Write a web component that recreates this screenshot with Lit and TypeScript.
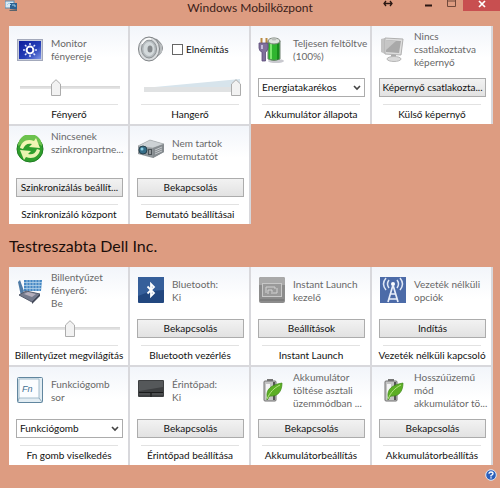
import { LitElement, html, css, svg, nothing, TemplateResult } from "lit";
import { customElement, property } from "lit/decorators.js";
import { classMap } from "lit/directives/class-map.js";

type Control =
  | { kind: "button"; text: string }
  | { kind: "select"; text: string }
  | { kind: "slider"; value: number; wedge?: boolean };

interface Tile {
  icon: string;
  lines: string[];
  check?: string;
  control: Control;
  label: string;
  edge?: string;
}

const battery = svg`
  <rect x="9" y="3" width="6" height="3" fill="#777"/>
  <rect x="6" y="5" width="12" height="20" rx="1" fill="#c4c4c4" stroke="#707070"/>
  <rect x="8" y="8" width="4" height="14" fill="#f4f4f4"/>
  <rect x="15" y="6" width="2" height="18" fill="#555"/>
  <path d="M9 21C8 13 13 9 24 7C24 15 20 21 12 20L9 24Z" fill="#5cae25" stroke="#3f8a18" stroke-width=".7"/>
  <path d="M9 23C12 16 16 12 22 9" stroke="#b7e585" fill="none"/>`;

const icons: Record<string, TemplateResult> = {
  monitor: svg`
    <rect x="1.5" y="4.5" width="25" height="21" fill="#c9cedd" stroke="#a3a9bb"/>
    <rect x="3" y="6" width="22" height="18" fill="url(#mon)"/>
    <defs><linearGradient id="mon" x1="0" x2="1" y1="0" y2="1"><stop offset="0" stop-color="#0c1c9c"/><stop offset=".6" stop-color="#2640b8"/><stop offset="1" stop-color="#7f95e6"/></linearGradient></defs>
    <circle cx="14" cy="15" r="3.4" fill="#1a2c9e" stroke="#fff" stroke-width="2"/>
    <path d="M14 8v2M14 20v2M7 15h2M19 15h2M9 10l1.5 1.5M17.5 18.5l1.5 1.5M19 10l-1.5 1.5M9 20l1.5-1.5" stroke="#dfe6ff" stroke-width="1.5"/>`,
  speaker: svg`
    <path d="M12 2L20 4Q26 9 26 13Q26 18 20 22L12 26Z" fill="#8e9194"/>
    <path d="M19 5L25 10V17L20 22Z" fill="#b9bdbf"/>
    <ellipse cx="12" cy="14" rx="10.5" ry="12" fill="#d9dcde" stroke="#7f8386"/>
    <ellipse cx="12" cy="14" rx="7.5" ry="9" fill="#b4babd" stroke="#8a8f92"/>
    <ellipse cx="12" cy="14" rx="5.5" ry="7" fill="#d3d9db"/>
    <ellipse cx="13" cy="14" rx="2.5" ry="3.5" fill="#85898c"/>
    <path d="M5 9Q8 3 14 4" stroke="#fff" fill="none" stroke-width="1.5"/>`,
  battery: svg`
    <ellipse cx="18" cy="26" rx="8" ry="2" fill="#c9c9cf"/>
    <path d="M10 6H22V24Q16 27 10 24Z" fill="#2fb52f" stroke="#6f8070"/>
    <path d="M19 7H21V24L19 25Z" fill="#188a1c"/><path d="M12 8H14V24H12Z" fill="#7be66d"/>
    <ellipse cx="16" cy="6" rx="6" ry="3" fill="#dfe3de" stroke="#7a837a"/>
    <ellipse cx="16" cy="4" rx="2.5" ry="1.5" fill="#b8bdb8"/>
    <path d="M3.5 3V9M8.5 3V9" stroke="#b98a42" stroke-width="2"/>
    <path d="M1 8H10V13Q9 17 7.5 17V26H4V17Q1 16 1 13Z" fill="#80709c" stroke="#5b4c78" stroke-width=".8"/>
    <path d="M3 10H5V14H3Z" fill="#c6bbdd"/>`,
  display: svg`
    <path d="M2 4L6 3V19L2 17Z" fill="#c4c4c4"/>
    <path d="M6 3L24 4L22 20L6 19Z" fill="#dedede" stroke="#b0b0b0"/>
    <path d="M7 5L22 6L20 18L7 17Z" fill="#a9a9a9"/>
    <path d="M7 5L17 6L7 15Z" fill="#c6c6c6"/>
    <path d="M12 20H17V23H12Z" fill="#aaa"/>
    <ellipse cx="15" cy="24" rx="7" ry="2.5" fill="#dadada" stroke="#b7b7b7"/>`,
  sync: svg`
    <circle cx="14" cy="14" r="13" fill="#2f9f2c" stroke="#1e7d20"/>
    <path d="M2 11A12 12 0 0 1 26 11Q14 3 2 11Z" fill="#6cc24e"/>
    <path d="M4 13C5 7 11 3 18 6L20 3L24 13L13 12L16 9C12 8 9 9 7 14Z" fill="#f3f5b4"/>
    <path d="M24 15C23 21 17 25 10 22L8 25L4 15L15 16L12 19C16 20 19 19 21 14Z" fill="#e9f3b0"/>`,
  projector: svg`
    <path d="M1 11L13 5L27 9V17L16 23L1 19Z" fill="#8f9599"/>
    <path d="M1 11L13 5L27 9L16 13Z" fill="#cdd2d5" stroke="#a2a7aa" stroke-width=".6"/>
    <path d="M16 13L27 9V17L16 23Z" fill="#858b8f"/>
    <path d="M18 15L25 12M18 17L25 14M18 19L25 16" stroke="#c5c9cc"/>
    <circle cx="6" cy="15" r="4" fill="#356d88" stroke="#27434f"/><circle cx="5" cy="14" r="1.5" fill="#8ed0e4"/>
    <path d="M11 14H15V20H11Z" fill="#4c5357"/><path d="M12 16H14M12 18H14" stroke="#dce0e2"/>`,
  keyboard: svg`
    <path d="M2 6L4 4L8 15L5 20Z" fill="#4f7ba6"/>
    <path d="M8 4H26L25 15H8Z" fill="#4688c4"/>
    <path d="M8 6.5H26M8 9.5H26M8 12.5H25M11 4V15M14 4V15M17 4V15M20 4V15M23 4V15" stroke="#b5d3ea" stroke-width=".8"/>
    <path d="M3 19L10 15L24 18L16 26Z" fill="#747a8c" stroke="#555b6c"/>
    <path d="M8 18L12 16L20 18L16 21Z" fill="#b4aebb"/><path d="M16 26L24 18V20L16 28Z" fill="#414656"/>`,
  bluetooth: svg`
    <rect x="1" y="1" width="26" height="26" rx="1" fill="#22477f"/>
    <path d="M1 1H27V14Q14 14 1 20Z" fill="#365f9a"/>
    <path d="M10.5 10.5L17 17L14 20V8L17 11L10.5 17.5" stroke="#fff" stroke-width="1.8" fill="none"/>`,
  launch: svg`
    <rect x="1" y="1" width="26" height="26" rx="2" fill="#8c8c8c"/>
    <path d="M1 3Q1 1 3 1H25Q27 1 27 3V9H1Z" fill="#a9a9a9"/>
    <rect x="4.5" y="7.5" width="19" height="13" fill="#9a9a9a" stroke="#c8c8c8"/>
    <path d="M8 17V11H17V13M10 18V14H14V18M15 17L19 17V12" stroke="#d2d2d2" fill="none"/><path d="M2 24H26" stroke="#6e6e6e"/>`,
  wireless: svg`
    <rect x="1" y="1" width="26" height="26" fill="#4c6ba8"/>
    <circle cx="14" cy="8" r="2" fill="#fff"/>
    <path d="M14 9L9 26M14 9L19 26M11.5 18H16.5M10 23H18" stroke="#e8eef9" stroke-width="1.7" fill="none"/>
    <path d="M10 4Q7 8 10 12M7 2Q2 8 7 14M18 4Q21 8 18 12M21 2Q26 8 21 14" stroke="#dfe7f6" stroke-width="1.5" fill="none"/>`,
  fn: svg`
    <rect x="1.5" y="1.5" width="25" height="25" rx="1" fill="#e3edf3" stroke="#61869f"/>
    <path d="M3 3H23V22H3Z" fill="#fbfdff" stroke="#a3bccb"/><path d="M23 22L26 26M3 22L2 26" stroke="#8eabbd"/>
    <text x="6" y="16" font-family="Liberation Sans, sans-serif" font-size="9" font-style="italic" fill="#3f6f91">Fn</text>`,
  touchpad: svg`
    <rect x="1" y="4" width="26" height="17" rx="1" fill="#3d3f41"/>
    <path d="M2 5H26V11L2 15Z" fill="#55585a"/>
    <path d="M2 16.5H26M14 17V21" stroke="#191a1b"/><path d="M2 18H13M15 18H26" stroke="#5c5f61"/>`,
  leaf: battery,
};

const firstTiles: Tile[] = [
  { icon: "monitor", lines: ["Monitor", "fényereje"], control: { kind: "slider", value: 34 }, label: "Fényerő" },
  { icon: "speaker", lines: [], check: "Elnémítás", control: { kind: "slider", value: 100, wedge: true }, label: "Hangerő" },
  { icon: "battery", lines: ["Teljesen feltöltve", "(100%)"], control: { kind: "select", text: "Energiatakarékos" }, label: "Akkumulátor állapota", edge: "bottom" },
  { icon: "display", lines: ["Nincs", "csatlakoztatva", "képernyő"], control: { kind: "button", text: "Képernyő csatlakozta..." }, label: "Külső képernyő", edge: "bottom" },
  { icon: "sync", lines: ["Nincsenek", "szinkronpartne...", "\u00a0"], control: { kind: "button", text: "Szinkronizálás beállít..." }, label: "Szinkronizáló központ", edge: "bottom" },
  { icon: "projector", lines: ["Nem tartok", "bemutatót"], control: { kind: "button", text: "Bekapcsolás" }, label: "Bemutató beállításai", edge: "bottom" },
];

const dellTiles: Tile[] = [
  { icon: "keyboard", lines: ["Billentyűzet", "fényerő:", "Be"], control: { kind: "slider", value: 50 }, label: "Billentyűzet megvilágítás" },
  { icon: "bluetooth", lines: ["Bluetooth:", "Ki"], control: { kind: "button", text: "Bekapcsolás" }, label: "Bluetooth vezérlés" },
  { icon: "launch", lines: ["Instant Launch", "kezelő"], control: { kind: "button", text: "Beállítások" }, label: "Instant Launch" },
  { icon: "wireless", lines: ["Vezeték nélküli", "opciók"], control: { kind: "button", text: "Indítás" }, label: "Vezeték nélküli kapcsoló" },
  { icon: "fn", lines: ["Funkciógomb", "sor"], control: { kind: "select", text: "Funkciógomb" }, label: "Fn gomb viselkedés", edge: "bottom" },
  { icon: "touchpad", lines: ["Érintőpad:", "Ki"], control: { kind: "button", text: "Bekapcsolás" }, label: "Érintőpad beállítása", edge: "bottom" },
  { icon: "leaf", lines: ["Akkumulátor", "töltése asztali", "üzemmódban ..."], control: { kind: "button", text: "Bekapcsolás" }, label: "Akkumulátorbeállítás", edge: "bottom" },
  { icon: "leaf", lines: ["Hosszúüzemű", "mód", "akkumulátor tö..."], control: { kind: "button", text: "Bekapcsolás" }, label: "Akkumulátorbeállítás", edge: "bottom" },
];

@customElement("mobility-tile")
class MobilityTile extends LitElement {
  @property({ attribute: false }) tile!: Tile;

  static styles = css`
    :host { display: block; min-width: 0; }
    .tile {
      display: flex;
      flex-direction: column;
      background: linear-gradient(#f2f5fa, #fff 32px);
      padding: 4px 5px 0 7px;
      border-right: 2px solid #d8d8dc;
      border-bottom: 2px solid #d8d8dc;
    }
    .bottom { border-bottom: 0; }
    .top { display: flex; align-items: center; gap: 7px; height: 39px; }
    .icon { flex: none; width: 28px; height: 28px; margin-bottom: 2px; }
    .desc { white-space: nowrap; line-height: 13px; color: #686868; }
    .check { display: flex; align-items: center; gap: 3px; color: #111; }
    .box {
      appearance: none;
      width: 11px;
      height: 11px;
      margin: 0;
      border: 1px solid #666;
      background: #fff;
    }
    .control { display: grid; align-items: center; height: 19px; margin-top: 9px; }
    .button, .select {
      box-sizing: border-box;
      width: 100%;
      height: 19px;
      font: inherit;
      color: #111;
      white-space: nowrap;
      border: 1px solid #acacac;
      border-radius: 0;
    }
    .button { padding: 0; overflow: hidden; background: linear-gradient(#f2f2f2, #e2e2e2); }
    .select {
      appearance: none;
      padding: 0 16px 0 3px;
      background: #fff url("data:image/svg+xml,%3Csvg xmlns='http://www.w3.org/2000/svg' width='8' height='6'%3E%3Cpath d='M1 1l3 3 3-3' fill='none' stroke='%23444' stroke-width='1.6'/%3E%3C/svg%3E") no-repeat right 3px center;
    }
    .slider, .wedge { grid-area: 1 / 1; }
    .slider {
      appearance: none;
      height: 17px;
      margin: 0 3px 0 4px;
      min-width: 0;
      background: linear-gradient(#d6d6d6, #e8e8e8) no-repeat center / 100% 3px;
    }
    .slider::-webkit-slider-thumb {
      appearance: none;
      width: 10px;
      height: 17px;
      background: url("data:image/svg+xml,%3Csvg xmlns='http://www.w3.org/2000/svg' width='10' height='17'%3E%3Cpath d='M.5 16.5V5L5 .7 9.5 5V16.5Z' fill='%23f2f2f2' stroke='%23acacac'/%3E%3C/svg%3E");
    }
    .loud { background: none; }
    .wedge { width: calc(100% - 11px); height: 17px; margin-left: 7px; }
    .name {
      margin: 7px 5px 0 4px;
      border-top: 1px solid #e2e2e2;
      height: 19px;
      line-height: 19px;
      display: flex;
      justify-content: center;
      white-space: nowrap;
      color: #111;
    }
  `;

  private renderControl(c: Control, label: string) {
    if (c.kind === "button") return html`<button class="button">${c.text}</button>`;
    if (c.kind === "select")
      return html`<select class="select" aria-label=${label}><option>${c.text}</option></select>`;
    return html`
      ${c.wedge
        ? html`<svg class="wedge" viewBox="0 0 100 17" preserveAspectRatio="none" aria-hidden="true">
            <path d="M0 9L100 0V9Z" fill="#d7e4ec"/><path d="M0 8H100V13H0Z" fill="#e0e2e3"/>
          </svg>`
        : nothing}
      <input class=${classMap({ slider: true, loud: !!c.wedge })} type="range" min="0" max="100"
        .value=${String(c.value)} aria-label=${label}>`;
  }

  render() {
    const t = this.tile;
    return html`
      <section class=${classMap({ tile: true, bottom: t.edge === "bottom" })}>
        <div class="top">
          <svg class="icon" viewBox="0 0 28 28" aria-hidden="true">${icons[t.icon]}</svg>
          ${t.check
            ? html`<label class="check"><input class="box" type="checkbox">${t.check}</label>`
            : html`<div class="desc">${t.lines.map((l) => html`<div>${l}</div>`)}</div>`}
        </div>
        <div class="control">${this.renderControl(t.control, t.label)}</div>
        <div class="name">${t.label}</div>
      </section>`;
  }
}

@customElement("app-root")
class AppRoot extends LitElement {
  static styles = css`
    :host {
      display: flex;
      flex-direction: column;
      box-sizing: border-box;
      min-height: 100vh;
      background: #dd9c81;
      font: 10px/13px Lato, "Open Sans", sans-serif;
      color: #111;
    }
    .bar {
      display: grid;
      grid-template-columns: 1fr auto 1fr;
      align-items: start;
      height: 26px;
    }
    .logo { width: 13px; height: 12px; margin-left: 5px; }
    .title { margin: 0; font: 12px/15px Lato, sans-serif; color: #3b211a; white-space: nowrap; }
    .buttons { display: flex; justify-content: flex-end; }
    .win { width: 23px; height: 11px; padding: 0; border: 0; background: none; display: flex; justify-content: center; }
    .resize { margin-right: 18px; }
    .close { width: 37px; background: #c84f50; }
    .tiles {
      display: grid;
      grid-template-columns: repeat(4, 1fr);
      grid-auto-rows: 100px;
      margin: 0 7px 0 9px;
    }
    .heading { margin: 8px 9px 10px; font: 16px/23px Lato, sans-serif; color: #1b0e0a; }
    .foot { display: flex; justify-content: flex-end; padding: 2px 3px 0 0; }
    .help { width: 12px; height: 12px; padding: 0; border: 0; background: none; display: flex; }
  `;

  private grid(tiles: Tile[]) {
    return html`<div class="tiles">${tiles.map((t) => html`<mobility-tile .tile=${t}></mobility-tile>`)}</div>`;
  }

  render() {
    return html`
      <header class="bar">
        <svg class="logo" viewBox="0 0 13 12" aria-hidden="true">
          <rect width="9" height="7" y="1" fill="#dce9f2" stroke="#5688ad"/>
          <rect x="5" y="3" width="7" height="6" fill="#2c6292"/>
          <path d="M2 5L4 3L6 5M7 5H10V7" stroke="#9fd0ec" fill="none"/>
          <path d="M4 10L12 9V11H5Z" fill="#59636c"/>
        </svg>
        <h1 class="title">Windows Mobilközpont</h1>
        <div class="buttons">
          <button class="win resize" aria-label="Átméretezés"><svg width="10" height="7"><path d="M1 3.5H9M3 1L1 3.5L3 6M7 1L9 3.5L7 6" stroke="#2a1712" stroke-width="1.3" fill="none"/></svg></button>
          <button class="win" aria-label="Kis méret"><svg width="8" height="8"><path d="M0 5.5H7" stroke="#2a1712" stroke-width="2"/></svg></button>
          <button class="win" aria-label="Teljes méret"><svg width="9" height="8"><path d="M.5 0V6.5H8.5V0M0 1H9" stroke="#70493b" fill="none"/></svg></button>
          <button class="win close" aria-label="Bezárás"><svg width="8" height="8"><path d="M1 1L7 7M7 1L1 7" stroke="#fff" stroke-width="1.7"/></svg></button>
        </div>
      </header>
      ${this.grid(firstTiles)}
      <h2 class="heading">Testreszabta Dell Inc.</h2>
      ${this.grid(dellTiles)}
      <footer class="foot">
        <button class="help" aria-label="Súgó">
          <svg width="12" height="12" viewBox="0 0 12 12"><circle cx="6" cy="6" r="5.3" fill="#2b5fbb" stroke="#dfe8f6"/><path d="M4 4.7Q4 3 6 3T8 4.7Q8 5.5 6 6.5V7.5M6 8.3V9.5" stroke="#fff" stroke-width="1.3" fill="none"/></svg>
        </button>
      </footer>`;
  }
}
